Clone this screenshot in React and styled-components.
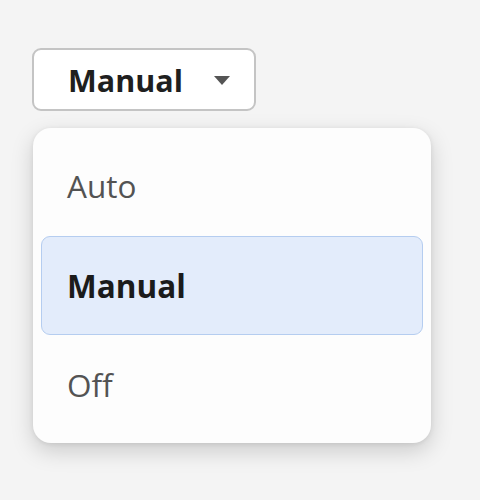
import React, { useState } from "react";
import styled, { createGlobalStyle } from "styled-components";

const Global = createGlobalStyle`
  html, body { margin: 0; padding: 0; background: #f4f4f4; }
  body { font-family: "Open Sans", "Noto Sans", sans-serif; }
`;

const Page = styled.div`
  width: 480px;
  height: 500px;
  box-sizing: border-box;
  padding: 48px 0 0 32px;
  display: flex;
  flex-direction: column;
  align-items: flex-start;
  gap: 17px;
`;

const Trigger = styled.button`
  width: 224px;
  height: 63px;
  box-sizing: border-box;
  display: flex;
  align-items: center;
  justify-content: space-between;
  padding: 0 24px 0 34px;
  background: #ffffff;
  border: 2px solid #c4c4c4;
  border-radius: 9px;
  font-family: inherit;
  font-size: 30.5px;
  font-weight: 700;
  color: #1f1f1f;
  cursor: pointer;
`;

const Caret = styled.svg`
  width: 16px;
  height: 9px;
  flex: none;
  margin-top: 2px;
`;

const Menu = styled.ul`
  list-style: none;
  margin: 0 0 0 1px;
  width: 398px;
  box-sizing: border-box;
  padding: 8px;
  background: #fdfdfd;
  border-radius: 18px;
  box-shadow: 0 8px 22px rgba(0, 0, 0, 0.17), 0 1px 5px rgba(0, 0, 0, 0.08);
  display: flex;
  flex-direction: column;
`;

const Item = styled.li`
  height: 99.5px;
  box-sizing: border-box;
  display: flex;
  align-items: center;
  padding-left: 25px;
  border: 1.5px solid ${(p) => (p.$selected ? "#b5cdf0" : "transparent")};
  border-radius: 9px;
  background: ${(p) => (p.$selected ? "#e3ecfb" : "transparent")};
  font-size: 31.5px;
  font-weight: ${(p) => (p.$selected ? 700 : 400)};
  color: ${(p) => (p.$selected ? "#1b1b1b" : "#535353")};
  cursor: pointer;
`;

const options = ["Auto", "Manual", "Off"];

export default function App() {
  const [value, setValue] = useState("Manual");
  return (
    <>
      <Global />
      <Page>
        <Trigger>
          {value}
          <Caret viewBox="0 0 16 9">
            <path d="M0 0 H16 L8 9 Z" fill="#555555" />
          </Caret>
        </Trigger>
        <Menu>
          {options.map((o) => (
            <Item key={o} $selected={o === value} onClick={() => setValue(o)}>
              {o}
            </Item>
          ))}
        </Menu>
      </Page>
    </>
  );
}
